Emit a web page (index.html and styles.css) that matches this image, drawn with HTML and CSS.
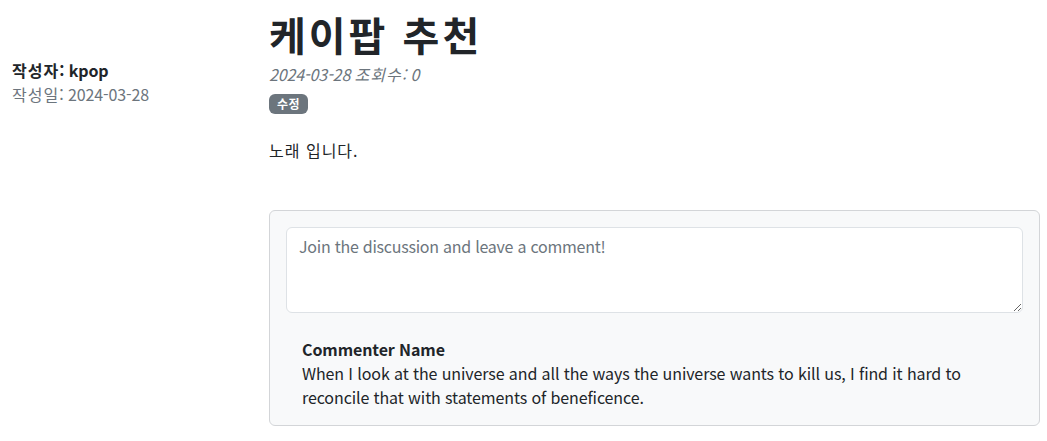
FILE: index.html
```html
<!DOCTYPE html>
<html lang="ko">
<head>
<meta charset="utf-8">
<title>케이팝 추천</title>
<link rel="stylesheet" href="styles.css">
</head>
<body>
<div class="page">
  <aside class="side">
    <div class="author">
      <div class="author-name"><span class="ko">작성자</span>: kpop</div>
      <div class="author-date"><span class="ko">작성일</span>: 2024-03-28</div>
    </div>
  </aside>
  <main class="main">
    <article>
      <header class="post-header">
        <h1 class="post-title">케이팝 추천</h1>
        <div class="post-meta">2024-03-28 <span class="ko">조회수</span>: 0</div>
        <div class="tags"><a class="badge" href="#">수정</a></div>
      </header>
      <section class="post-body">
        <p class="ko">노래 입니다.</p>
      </section>
    </article>
    <section class="comments">
      <div class="card">
        <form class="comment-form">
          <textarea class="form-control" rows="3" placeholder="Join the discussion and leave a comment!"></textarea>
        </form>
        <div class="comment">
          <div class="comment-body">
            <div class="comment-name">Commenter Name</div>
            When I look at the universe and all the ways the universe wants to kill us, I find it hard to reconcile that with statements of beneficence.
          </div>
        </div>
      </div>
    </section>
  </main>
</div>
</body>
</html>
```
FILE: styles.css
```css
* { box-sizing: border-box; }
html, body { margin: 0; padding: 0; background: #fff; }
body {
  font-family: "Noto Sans CJK KR", "Noto Sans", sans-serif;
  font-size: 16px;
  line-height: 24px;
  color: #212529;
  letter-spacing: -0.1px;
}
.ko { letter-spacing: 1px; }
.page {
  display: grid;
  grid-template-columns: 245px 1fr;
  column-gap: 12px;
  padding: 10px 7px 0 12px;
}
.side { padding-top: 48px; }
.author-name { font-weight: 700; }
.author-date { color: #6c757d; }
.main { min-width: 0; }
.post-header { margin-bottom: 24px; }
.post-title {
  margin: 0 0 4px 0;
  font-size: 40px;
  line-height: 48px;
  font-weight: 700;
  letter-spacing: 3px;
}
.post-meta {
  color: #6c757d;
  font-style: italic;
  margin-bottom: 8px;
}
.tags { display: flex; }
.badge {
  display: block;
  padding: 4px 8px;
  font-size: 12px;
  line-height: 12px;
  font-weight: 700;
  color: #fff;
  background: #6c757d;
  border-radius: 6px;
  text-decoration: none;
  letter-spacing: 0.5px;
}
.post-body { margin-bottom: 48px; }
.post-body p { margin: 0 0 16px 0; }
.card {
  background: #f8f9fa;
  border: 1px solid #d3d5d8;
  border-radius: 6px;
  padding: 16px;
}
.comment-form { margin: 0 0 24px 0; }
.form-control {
  display: block;
  width: 100%;
  height: 86px;
  padding: 6px 12px;
  font: inherit;
  line-height: 24px;
  color: #212529;
  background: #fff;
  border: 1px solid #dee2e6;
  border-radius: 6px;
  resize: vertical;
  letter-spacing: -0.25px;
}
.form-control::placeholder { color: #6c757d; }
.comment { display: flex; }
.comment-body { margin-left: 16px; }
.comment-name { font-weight: 700; }
```
